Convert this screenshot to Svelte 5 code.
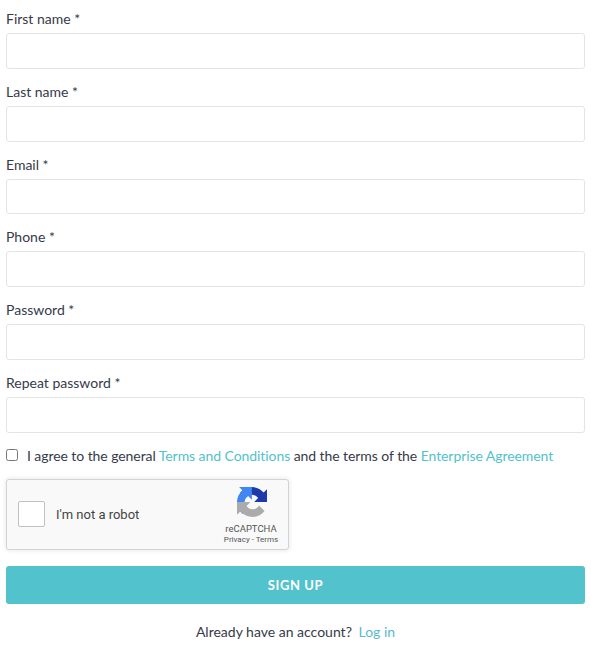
<script>
  const fields = [
    { id: 'first', label: 'First name *', type: 'text' },
    { id: 'last', label: 'Last name *', type: 'text' },
    { id: 'email', label: 'Email *', type: 'email' },
    { id: 'phone', label: 'Phone *', type: 'tel' },
    { id: 'pass', label: 'Password *', type: 'password' },
    { id: 'repeat', label: 'Repeat password *', type: 'password' }
  ];
</script>

<form class="form" onsubmit={(e) => e.preventDefault()}>
  {#each fields as f}
    <div class="group">
      <label for={f.id}>{f.label}</label>
      <input id={f.id} type={f.type} />
    </div>
  {/each}

  <div class="agree">
    <input type="checkbox" id="agree" />
    <label for="agree">I agree to the general <a href="#terms">Terms and Conditions</a> and the terms of the <a href="#ea">Enterprise Agreement</a></label>
  </div>

  <div class="captcha">
    <span class="tick"></span>
    <span class="robot">I'm not a robot</span>
    <div class="brand">
      <svg width="30" height="30" viewBox="0 0 64 64" aria-hidden="true">
        <path fill="#1c3aa9" d="M64 31.955l-.033-1.37V4.687l-7.16 7.16C50.948 4.674 42.033.093 32.05.093c-10.4 0-19.622 4.96-25.458 12.64l11.736 11.86a15.55 15.55 0 0 1 4.754-5.334c2.05-1.6 4.952-2.906 8.968-2.906.485 0 .86.057 1.135.163 4.976.393 9.288 3.14 11.828 7.124l-8.307 8.307c10.522-.04 22.41-.066 27.295.005" />
        <path fill="#4285f4" d="M31.862.094l-1.37.033H4.594l7.16 7.16C4.58 13.147 0 22.06 0 32.046c0 10.4 4.96 19.622 12.64 25.458l11.86-11.736a15.55 15.55 0 0 1-5.334-4.754c-1.6-2.05-2.906-4.952-2.906-8.968 0-.485.057-.86.163-1.135.393-4.976 3.14-9.288 7.124-11.828l8.307 8.307c-.04-10.522-.066-22.41.005-27.295" />
        <path fill="#ababab" d="M.001 32.045l.033 1.37v25.898l7.16-7.16c7.16 7.173 16.074 11.753 26.058 11.753 10.4 0 19.622-4.96 25.458-12.64l-11.736-11.86a15.55 15.55 0 0 1-4.754 5.334c-2.05 1.6-4.952 2.906-8.968 2.906-.485 0-.86-.057-1.135-.163-4.976-.393-9.288-3.14-11.828-7.124l8.307-8.307c-10.522.04-22.41.066-27.295-.005" />
      </svg>
      <span class="rc">reCAPTCHA</span>
      <span class="links">Privacy - Terms</span>
    </div>
  </div>

  <button type="submit">SIGN UP</button>

  <p class="login">Already have an account? <a href="#login">Log in</a></p>
</form>

<style>
  :global(body) {
    margin: 0;
    background: #fff;
  }
  .form {
    padding: 10px 6px 0;
    font-family: Lato, "Noto Sans", sans-serif;
    font-size: 14px;
    color: #363a4a;
  }
  .group {
    margin-bottom: 14px;
  }
  .group:nth-child(6) {
    margin-bottom: 13px;
  }
  .group label {
    display: block;
    height: 18px;
    line-height: 18px;
    margin-bottom: 5px;
  }
  .group input {
    display: block;
    box-sizing: border-box;
    width: 100%;
    height: 35.8px;
    border: 1px solid #e2e4e6;
    border-radius: 3px;
    background: #fff;
    padding: 0 10px;
    outline: none;
  }
  .agree {
    display: flex;
    align-items: center;
    height: 20px;
    letter-spacing: -0.07px;
  }
  .agree input {
    width: 12px;
    height: 12px;
    margin: 0 9px 2px 0;
  }
  a {
    color: #52c2cc;
    text-decoration: none;
  }
  .captcha {
    box-sizing: border-box;
    display: flex;
    align-items: center;
    width: 283px;
    height: 71px;
    margin-top: 13px;
    background: #f9f9f9;
    border: 1px solid #d3d3d3;
    border-radius: 3px;
    box-shadow: 0 0 4px 1px rgba(0, 0, 0, 0.08);
    font-family: Roboto, sans-serif;
    color: #444;
  }
  .tick {
    box-sizing: border-box;
    width: 27px;
    height: 26px;
    margin-left: 11px;
    background: #fff;
    border: 1px solid #c1c1c1;
    border-radius: 2px;
  }
  .robot {
    margin-left: 11px;
    font-size: 13px;
  }
  .brand {
    margin-left: auto;
    width: 54px;
    margin-right: 10px;
    display: flex;
    flex-direction: column;
    align-items: center;
    color: #555;
    padding-top: 4px;
  }
  .brand svg {
    margin-left: 2px;
  }
  .rc {
    font-size: 9.5px;
    line-height: 12px;
    margin-top: 6px;
  }
  .links {
    font-size: 8px;
    line-height: 10px;
    white-space: nowrap;
  }
  button {
    display: block;
    width: 100%;
    height: 38px;
    margin-top: 16px;
    border: 0;
    border-radius: 3px;
    background: #52c2cc;
    color: #fff;
    font-family: inherit;
    font-size: 13px;
    font-weight: 700;
    letter-spacing: 0.6px;
  }
  .login {
    margin: 19px 0 0;
    text-align: center;
    line-height: 18px;
  }
  .login a {
    margin-left: 3px;
    color: #5ab8d0;
  }
</style>
